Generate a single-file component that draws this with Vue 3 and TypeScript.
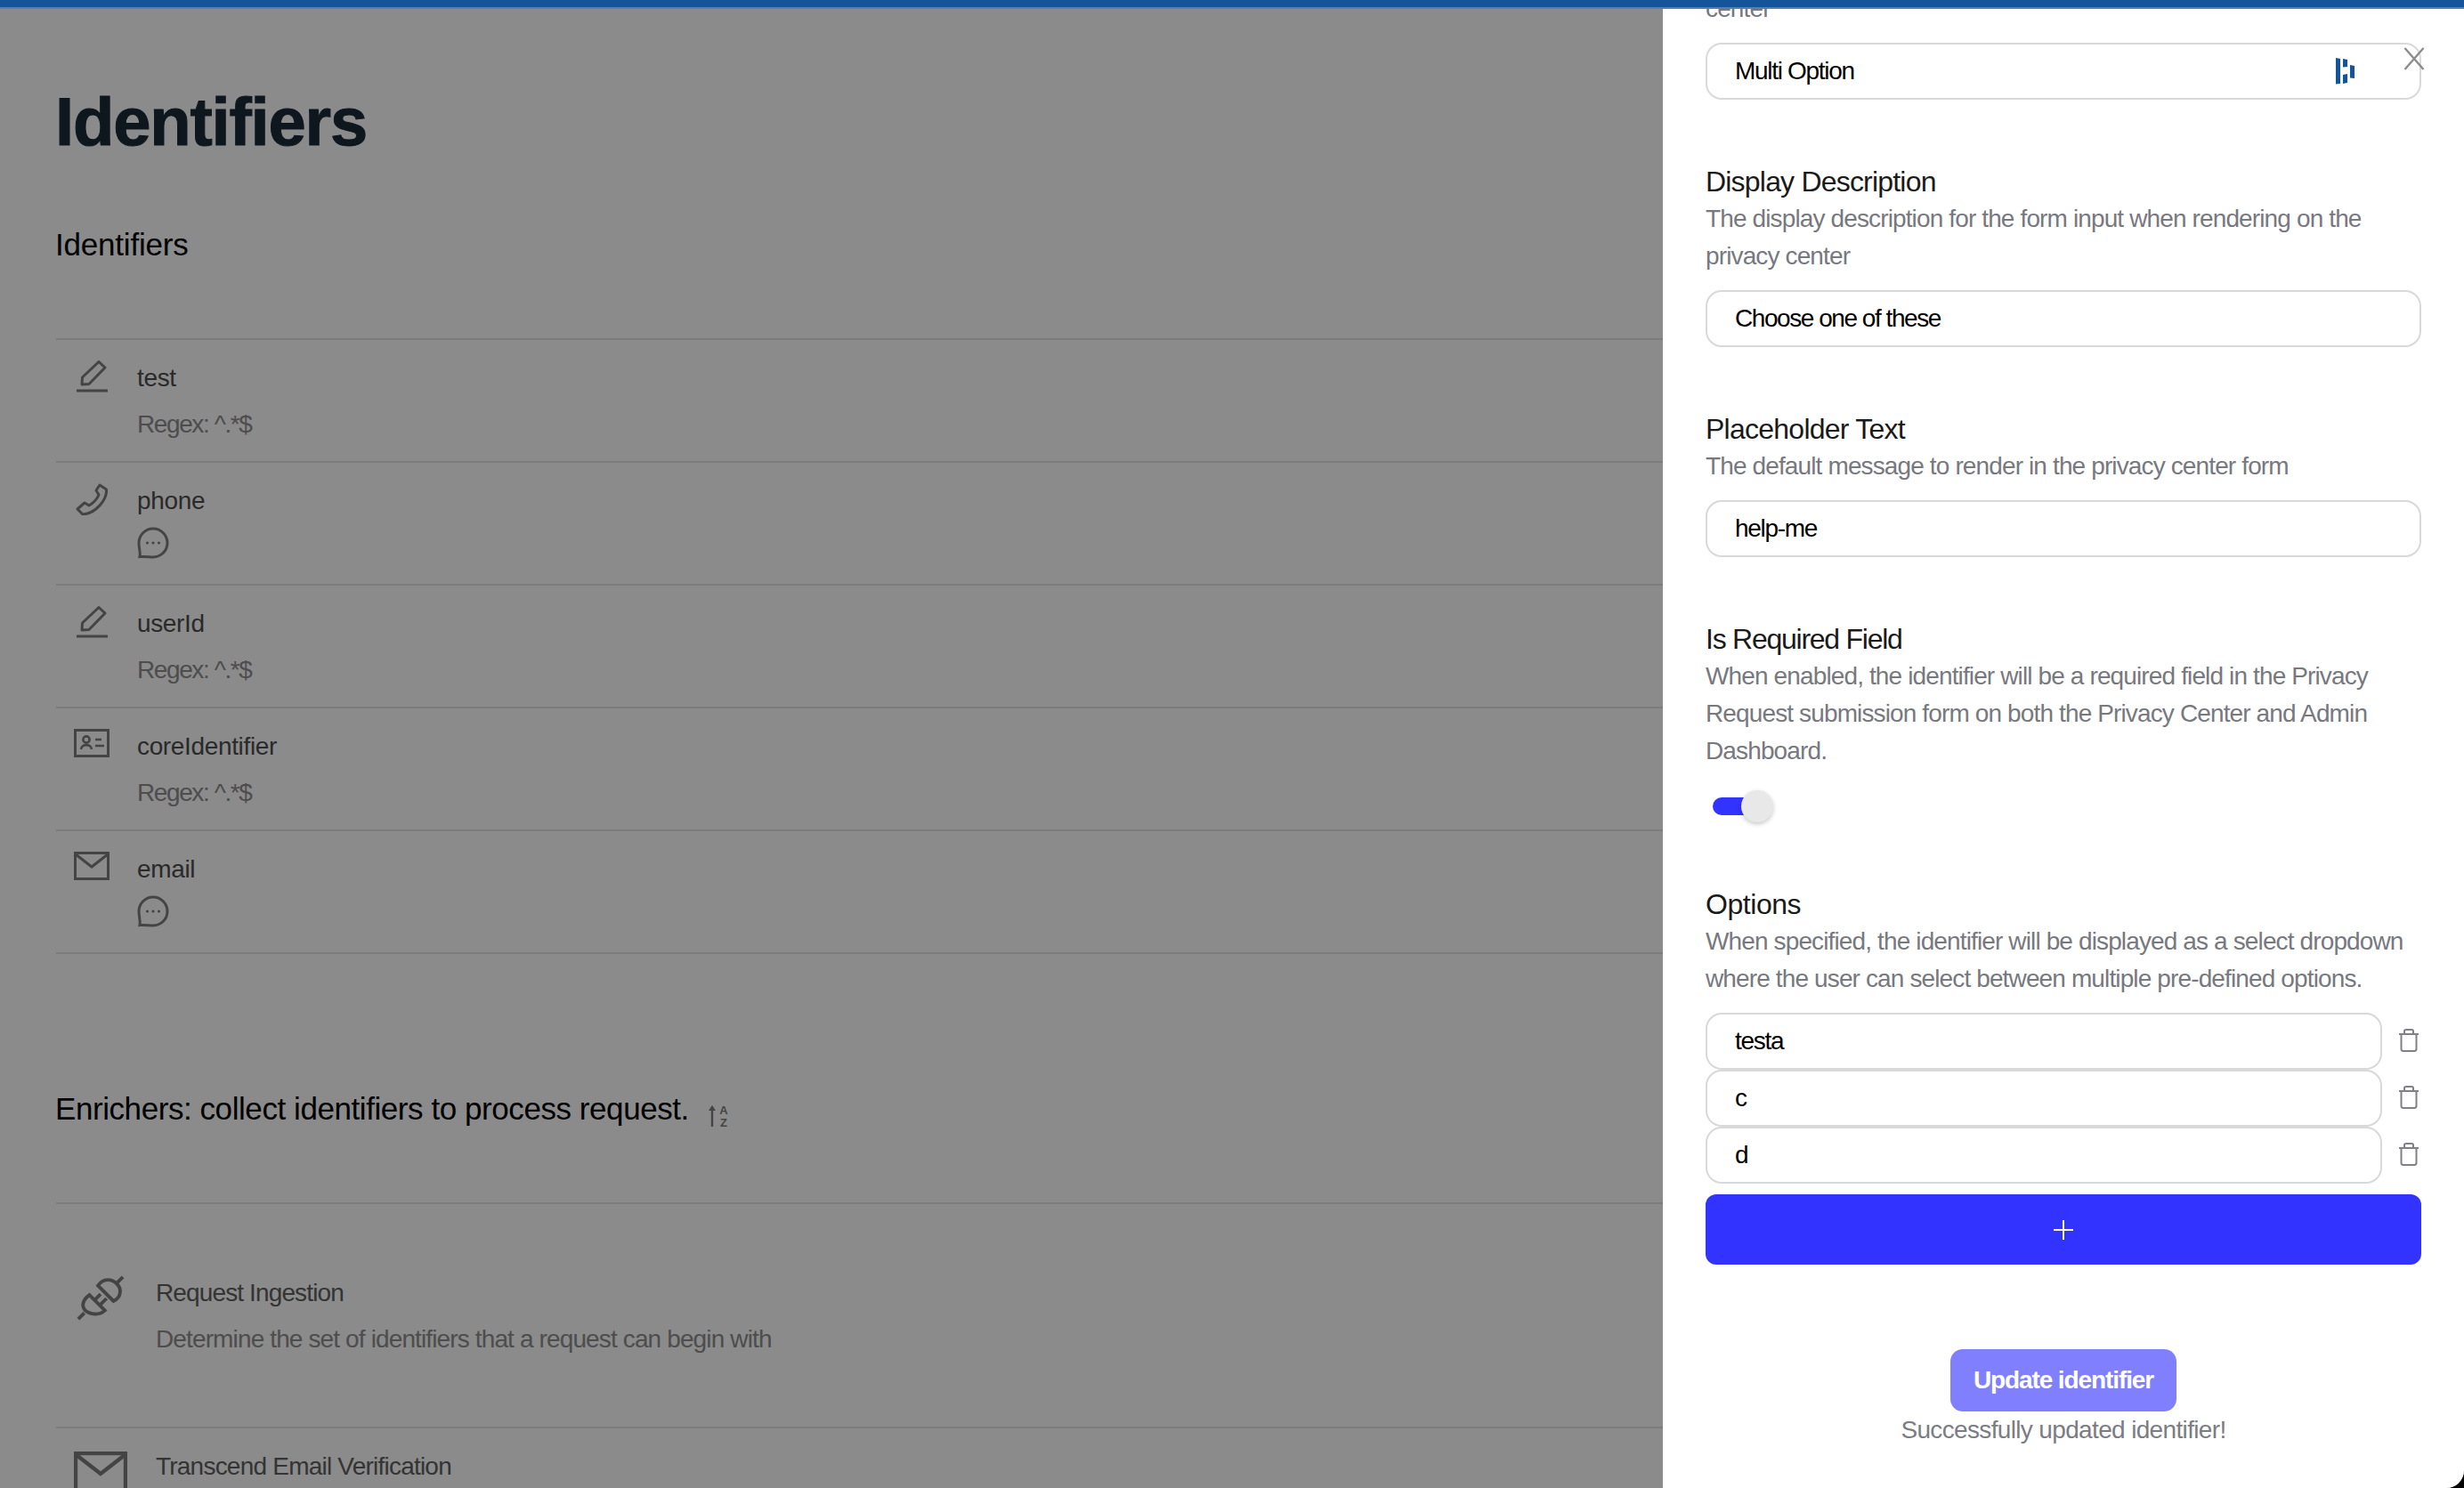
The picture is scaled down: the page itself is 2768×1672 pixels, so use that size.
<script setup lang="ts">
interface Identifier {
  name: string
  icon: 'pencil' | 'phone' | 'card' | 'mail'
  regex: boolean
}

const identifiers: Identifier[] = [
  { name: 'test', icon: 'pencil', regex: true },
  { name: 'phone', icon: 'phone', regex: false },
  { name: 'userId', icon: 'pencil', regex: true },
  { name: 'coreIdentifier', icon: 'card', regex: true },
  { name: 'email', icon: 'mail', regex: false },
]

const options: string[] = ['testa', 'c', 'd']
</script>

<template>
  <div class="page">
    <div class="topbar"></div>
    <main class="main">
      <h1 class="title">Identifiers</h1>
      <h2 class="subtitle">Identifiers</h2>
      <ul class="list">
        <li v-for="item in identifiers" :key="item.name" class="row">
          <span class="row-icon">
            <svg v-if="item.icon === 'pencil'" width="36" height="36" viewBox="0 0 36 36" fill="none" stroke="currentColor" stroke-width="3">
              <path d="M7 27 L7.5 19 L26 1.5 L33 8 L15 26.5 Z" stroke-linejoin="round" />
              <path d="M1 34 H36" stroke-width="3.2" />
            </svg>
            <svg v-else-if="item.icon === 'phone'" width="36" height="36" viewBox="0 0 36 36" fill="none" stroke="currentColor" stroke-width="3" stroke-linejoin="round">
              <path d="M27 2 L34.5 7 C35.5 19 22 34 8 35 L2 29 L10 22 L15 25 C20 22 24 18 26 13 L23 8 Z" />
            </svg>
            <svg v-else-if="item.icon === 'card'" width="40" height="32" viewBox="0 0 40 32" fill="none" stroke="currentColor" stroke-width="3">
              <rect x="1.5" y="1.5" width="37" height="29" />
              <circle cx="14" cy="12" r="3.6" stroke-width="2.6" />
              <path d="M8 23 C8.5 16.5 19.5 16.5 20 23" stroke-width="2.6" />
              <path d="M24 12 H31 M24 19 H34" stroke-width="2.6" />
            </svg>
            <svg v-else width="40" height="32" viewBox="0 0 40 32" fill="none" stroke="currentColor" stroke-width="3">
              <rect x="1.5" y="1.5" width="37" height="29" />
              <path d="M2 3 L20 17 L38 3" />
            </svg>
          </span>
          <div class="row-text">
            <div class="row-name">{{ item.name }}</div>
            <div v-if="item.regex" class="row-regex">Regex: ^.*$</div>
            <svg v-else class="row-chat" width="36" height="36" viewBox="0 0 36 36" fill="none" stroke="currentColor" stroke-width="3">
              <path d="M18 2 A16 16 0 1 1 18 34 C14 34 9 33 3 33.5 C4 29 2 24 2 18 A16 16 0 0 1 18 2 Z" />
              <circle cx="11.5" cy="18" r="1.6" fill="currentColor" stroke="none" />
              <circle cx="18" cy="18" r="1.6" fill="currentColor" stroke="none" />
              <circle cx="24.5" cy="18" r="1.6" fill="currentColor" stroke="none" />
            </svg>
          </div>
        </li>
      </ul>

      <div class="enrich-head">
        <h2 class="enrich-title">Enrichers: collect identifiers to process request.</h2>
        <svg class="sort" width="26" height="30" viewBox="0 0 26 30">
          <path d="M4 3 V25" stroke="currentColor" stroke-width="2.4" />
          <path d="M4 1 L8 7 H0 Z" fill="currentColor" />
          <text x="17" y="11" text-anchor="middle" class="sort-letter">A</text>
          <text x="17" y="25" text-anchor="middle" class="sort-letter">Z</text>
        </svg>
      </div>

      <div class="enrich-list">
        <div class="enrich-row">
          <span class="enrich-icon">
            <svg width="54" height="54" viewBox="0 0 56 56" fill="none" stroke="currentColor" stroke-width="4">
              <path d="M54 3 L47 10" />
              <path d="M25 13 L43 31 C52 27 53 17 47 11 C41 5 31 4 25 13 Z" />
              <path d="M2 52 L9 45" />
              <path d="M15 24 L33 42 C27 48 16 47 10 42 C5 36 8 29 15 24 Z" />
              <path d="M21 30 L28 23 M27 36 L35 28" />
            </svg>
          </span>
          <div class="enrich-text">
            <div class="enrich-name">Request Ingestion</div>
            <div class="enrich-desc">Determine the set of identifiers that a request can begin with</div>
          </div>
        </div>
        <div class="enrich-row enrich-row--second">
          <span class="enrich-icon">
            <svg width="60" height="48" viewBox="0 0 60 48" fill="none" stroke="currentColor" stroke-width="4.4">
              <rect x="2" y="2" width="56" height="44" />
              <path d="M3 4 L30 25 L57 4" />
            </svg>
          </span>
          <div class="enrich-text">
            <div class="enrich-name enrich-name--long">Transcend Email Verification</div>
          </div>
        </div>
      </div>
    </main>

    <div class="overlay"></div>

    <aside class="drawer">
      <svg class="close" width="24" height="26" viewBox="0 0 24 26" fill="none" stroke="#8c8c8c" stroke-width="2.4">
        <path d="M1.5 1 L22.5 25 M22.5 1 L1.5 25" />
      </svg>
      <div class="drawer-inner">
        <p class="desc">center</p>
        <div class="control control--select">
          <span>Multi Option</span>
          <svg width="21" height="30" viewBox="0 0 21 30" fill="#14549b">
            <path d="M0 0 L5 1 V29 L0 29.5 Z" />
            <path d="M8 1 L13 2 V10 L8 10.5 Z M8 19 L13 18 V28 L8 29 Z" />
            <path d="M16 8 L21 9 V23 L16 22.5 Z" />
          </svg>
        </div>

        <section class="field">
          <div class="label label--display">Display Description</div>
          <p class="desc">The display description for the form input when rendering on the privacy center</p>
          <input class="control control--choose" value="Choose one of these" readonly />
        </section>

        <section class="field">
          <div class="label label--placeholder">Placeholder Text</div>
          <p class="desc">The default message to render in the privacy center form</p>
          <input class="control" value="help-me" readonly />
        </section>

        <section class="field">
          <div class="label label--required">Is Required Field</div>
          <p class="desc">When enabled, the identifier will be a required field in the Privacy Request submission form on both the Privacy Center and Admin Dashboard.</p>
          <div class="toggle">
            <span class="toggle-track"></span>
            <span class="toggle-thumb"></span>
          </div>
        </section>

        <section class="field field--options">
          <div class="label label--options">Options</div>
          <p class="desc">When specified, the identifier will be displayed as a select dropdown where the user can select between multiple pre-defined options.</p>
          <div class="option-list">
            <div v-for="opt in options" :key="opt" class="option">
              <input class="control control--option" :value="opt" readonly />
              <svg class="trash" width="24" height="26" viewBox="0 0 24 26" fill="none" stroke="#808088" stroke-width="2">
                <path d="M1 6 H23" />
                <path d="M7 6 V2.5 C7 1.5 8 1 9 1 H15 C16 1 17 1.5 17 2.5 V6" />
                <path d="M3.5 6 V22.5 C3.5 24 4.5 25 6 25 H18 C19.5 25 20.5 24 20.5 22.5 V6" />
              </svg>
            </div>
          </div>
          <button class="add" type="button" aria-label="Add option">
            <svg width="24" height="24" viewBox="0 0 24 24" stroke="#fff" stroke-width="2">
              <path d="M12 1 V23 M1 12 H23" />
            </svg>
          </button>
        </section>

        <div class="actions">
          <button class="update" type="button">Update identifier</button>
          <p class="status">Successfully updated identifier!</p>
        </div>
      </div>
    </aside>
  </div>
</template>

<style scoped>
.page {
  position: relative;
  width: 2768px;
  height: 1672px;
  overflow: hidden;
  background: #fff;
  border-bottom-right-radius: 20px;
  font-family: "Liberation Sans", Arial, sans-serif;
}
.topbar {
  position: relative;
  z-index: 3;
  height: 8px;
  background: #14549b;
  border-bottom: 2px solid #4f80b8;
}
.main {
  padding: 82px 0 0 63px;
}
.title {
  margin: 0 0 0 -1px;
  font-size: 76px;
  line-height: 90px;
  font-weight: 700;
  letter-spacing: -1.2px;
  color: #1a2a38;
  -webkit-text-stroke: 1px #1a2a38;
}
.subtitle {
  margin: 71px 0 0 -1px;
  font-size: 35px;
  line-height: 44px;
  font-weight: 400;
  letter-spacing: -0.2px;
  color: #000;
}
.list {
  list-style: none;
  margin: 83px 0 0;
  padding: 0;
  border-bottom: 2px solid #e3e3e3;
}
.row {
  display: flex;
  align-items: flex-start;
  box-sizing: border-box;
  height: 138px;
  border-top: 2px solid #e3e3e3;
}
.row-icon {
  display: flex;
  justify-content: center;
  width: 40px;
  margin: 23px 31px 0 20px;
  color: #7d7d7d;
}
.row-text {
  padding-top: 23px;
}
.row-name {
  font-size: 28px;
  line-height: 40px;
  letter-spacing: -0.35px;
  color: #4e4e4e;
}
.row-regex {
  margin-top: 12px;
  font-size: 28px;
  line-height: 40px;
  letter-spacing: -1.4px;
  color: #8e8e8e;
}
.row-chat {
  display: block;
  margin-top: 9px;
  color: #7d7d7d;
}
.enrich-head {
  display: flex;
  align-items: flex-start;
  gap: 22px;
  margin: 152px 0 0 -1px;
}
.enrich-title {
  margin: 0;
  font-size: 35px;
  line-height: 44px;
  font-weight: 400;
  letter-spacing: -0.43px;
  color: #000;
}
.sort {
  margin-top: 17px;
  color: #7d7d7d;
}
.sort-letter {
  font-size: 13px;
  font-weight: 700;
  fill: currentColor;
}
.enrich-list {
  margin-top: 80px;
}
.enrich-row {
  display: flex;
  align-items: flex-start;
  box-sizing: border-box;
  height: 252px;
  padding-top: 80px;
  border-top: 2px solid #e3e3e3;
}
.enrich-row--second {
  padding-top: 23px;
}
.enrich-row--second .enrich-icon {
  margin-top: 3px;
}
.enrich-icon {
  display: flex;
  justify-content: center;
  width: 60px;
  margin: -1px 32px 0 20px;
  color: #7d7d7d;
}
.enrich-name {
  font-size: 28px;
  line-height: 40px;
  letter-spacing: -0.87px;
  color: #606060;
}
.enrich-name--long {
  letter-spacing: -0.78px;
}
.enrich-desc {
  margin-top: 12px;
  font-size: 28px;
  line-height: 40px;
  letter-spacing: -0.87px;
  color: #8e8e8e;
}
.overlay {
  position: absolute;
  inset: 10px 0 0 0;
  z-index: 1;
  background: rgba(0, 0, 0, 0.455);
}
.drawer {
  position: absolute;
  top: 10px;
  right: 0;
  bottom: 0;
  z-index: 2;
  box-sizing: border-box;
  width: 900px;
  padding: 0 48px 0 48px;
  overflow: hidden;
  background: #fff;
}
.close {
  position: absolute;
  top: 43px;
  right: 44px;
  z-index: 1;
}
.drawer-inner {
  margin-top: -21px;
}
.desc {
  margin: 0;
  font-size: 28px;
  line-height: 42px;
  letter-spacing: -0.87px;
  color: #78787f;
}
.control {
  display: block;
  box-sizing: border-box;
  width: 100%;
  height: 64px;
  margin-top: 17px;
  padding: 0 20px 0 31px;
  border: 2px solid #d9d9d9;
  border-radius: 18px;
  outline: none;
  background: #fff;
  font-family: "Liberation Sans", Arial, sans-serif;
  font-size: 28px;
  letter-spacing: -1.3px;
  color: #000;
}
.control--select {
  display: flex;
  align-items: center;
  justify-content: space-between;
  padding-right: 73px;
}
.control--choose {
  letter-spacing: -1.45px;
}
.control--option {
  flex: none;
  width: 760px;
  margin-top: 0;
}
.field {
  margin-top: 72px;
}
.field--options {
  margin-top: 66px;
}
.label {
  font-size: 32px;
  line-height: 41px;
  color: #1a1a1a;
}
.label--display {
  letter-spacing: -0.8px;
}
.label--placeholder {
  letter-spacing: -0.75px;
}
.label--required {
  letter-spacing: -1.25px;
}
.label--options {
  letter-spacing: -0.45px;
}
.toggle {
  position: relative;
  height: 43px;
  margin-top: 22px;
}
.toggle-track {
  position: absolute;
  top: 9px;
  left: 8px;
  width: 46px;
  height: 20px;
  border-radius: 10px;
  background: #3333ff;
}
.toggle-thumb {
  position: absolute;
  top: 1px;
  left: 40px;
  width: 36px;
  height: 36px;
  border-radius: 50%;
  background: #e8e8e8;
  box-shadow: 0 2px 5px rgba(0, 0, 0, 0.22);
}
.option-list {
  margin-top: 17px;
}
.option {
  display: flex;
  align-items: center;
  gap: 18px;
}
.trash {
  margin-top: -2px;
}
.add {
  display: flex;
  align-items: center;
  justify-content: center;
  width: 100%;
  height: 79px;
  margin-top: 12px;
  padding: 0;
  border: none;
  border-radius: 12px;
  background: #3333ff;
}
.actions {
  display: flex;
  flex-direction: column;
  align-items: center;
  margin-top: 95px;
}
.update {
  width: 254px;
  height: 70px;
  padding: 0;
  border: none;
  border-radius: 14px;
  background: #8080ff;
  font-family: "Liberation Sans", Arial, sans-serif;
  font-size: 28px;
  font-weight: 700;
  letter-spacing: -1.1px;
  color: #fff;
}
.status {
  margin: 0;
  font-size: 28px;
  line-height: 42px;
  letter-spacing: -0.65px;
  color: #7c7c84;
}
</style>

<style>
body {
  background: #000;
}
</style>
